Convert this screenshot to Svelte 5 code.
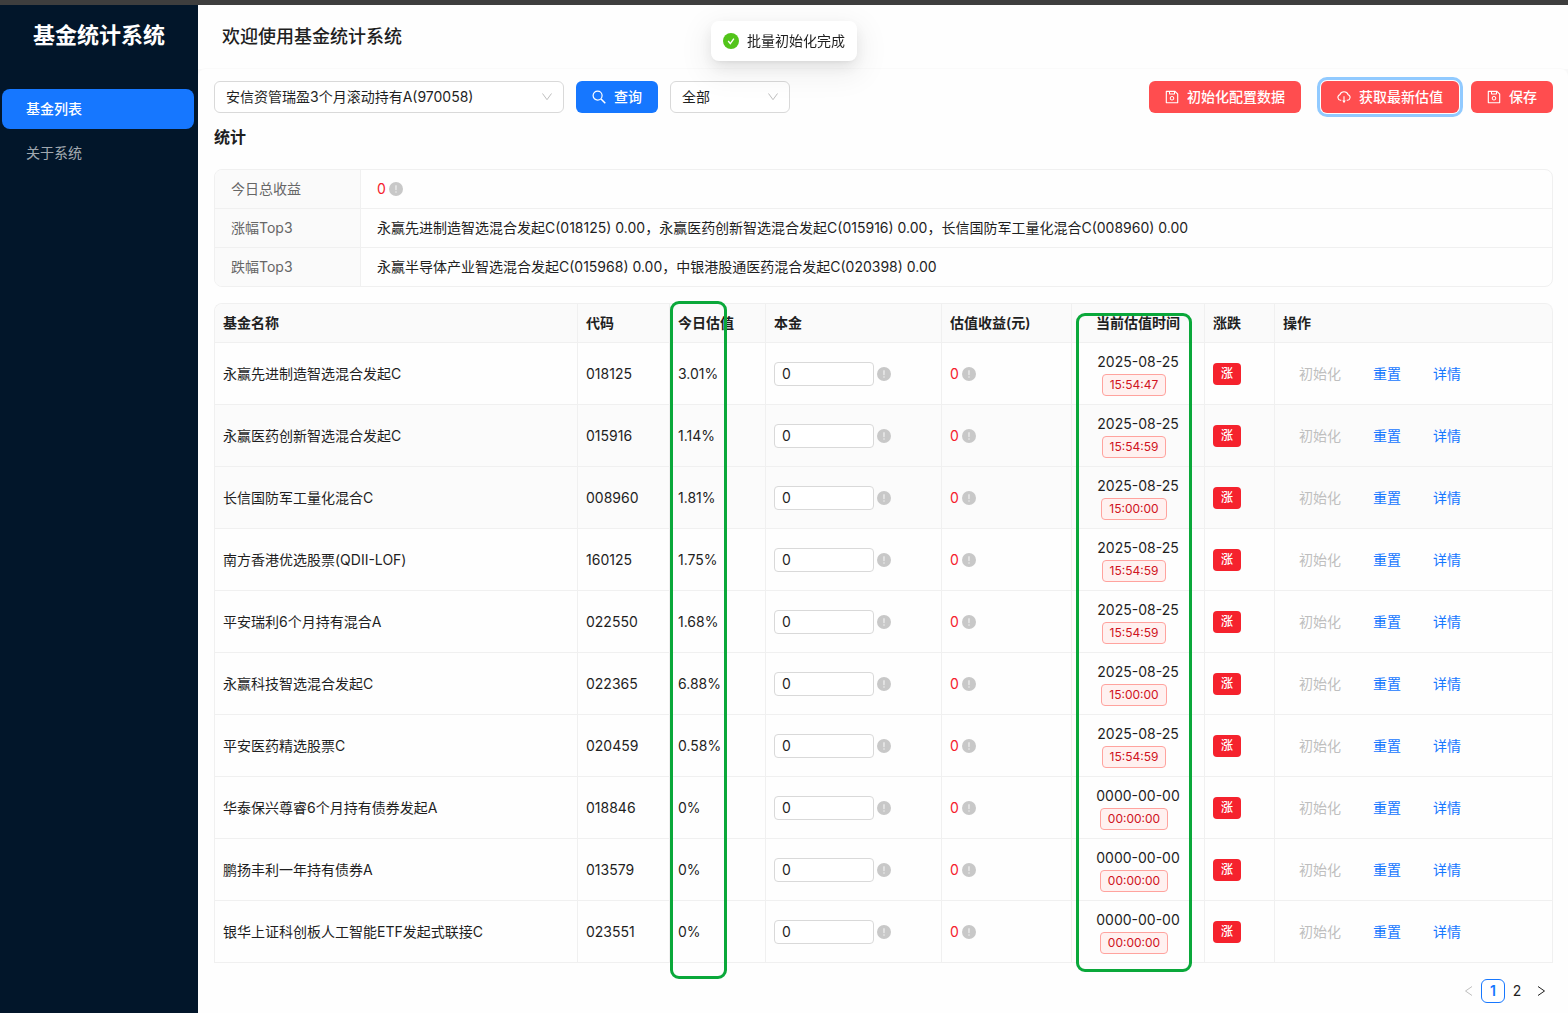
<script>
	const menus = ['基金列表', '关于系统'];
	let activeMenu = '基金列表';

	let fund = '970058';
	let type = 'all';
	let page = 1;

	const stats = [
		{ label: '今日总收益', total: 0 },
		{
			label: '涨幅Top3',
			text: '永赢先进制造智选混合发起C(018125) 0.00，永赢医药创新智选混合发起C(015916) 0.00，长信国防军工量化混合C(008960) 0.00',
		},
		{ label: '跌幅Top3', text: '永赢半导体产业智选混合发起C(015968) 0.00，中银港股通医药混合发起C(020398) 0.00' },
	];

	let funds = [
		{ name: '永赢先进制造智选混合发起C', code: '018125', rate: '3.01%', amount: 0, date: '2025-08-25', time: '15:54:47' },
		{ name: '永赢医药创新智选混合发起C', code: '015916', rate: '1.14%', amount: 0, date: '2025-08-25', time: '15:54:59', shaded: true },
		{ name: '长信国防军工量化混合C', code: '008960', rate: '1.81%', amount: 0, date: '2025-08-25', time: '15:00:00', shaded: true },
		{ name: '南方香港优选股票(QDII-LOF)', code: '160125', rate: '1.75%', amount: 0, date: '2025-08-25', time: '15:54:59' },
		{ name: '平安瑞利6个月持有混合A', code: '022550', rate: '1.68%', amount: 0, date: '2025-08-25', time: '15:54:59' },
		{ name: '永赢科技智选混合发起C', code: '022365', rate: '6.88%', amount: 0, date: '2025-08-25', time: '15:00:00' },
		{ name: '平安医药精选股票C', code: '020459', rate: '0.58%', amount: 0, date: '2025-08-25', time: '15:54:59' },
		{ name: '华泰保兴尊睿6个月持有债券发起A', code: '018846', rate: '0%', amount: 0, date: '0000-00-00', time: '00:00:00' },
		{ name: '鹏扬丰利一年持有债券A', code: '013579', rate: '0%', amount: 0, date: '0000-00-00', time: '00:00:00' },
		{ name: '银华上证科创板人工智能ETF发起式联接C', code: '023551', rate: '0%', amount: 0, date: '0000-00-00', time: '00:00:00' },
	];

	const reset = code => {
		funds = funds.map(item => (item.code === code ? { ...item, amount: 0 } : item));
	};
</script>

{#snippet tip()}
	<svg class="tip" viewBox="0 0 14 14" aria-hidden="true">
		<circle cx="7" cy="7" r="7" fill="#c8c8c8" />
		<path d="M6.500 3.500h1l-.1 4.600h-.8z" fill="#f0f0f0" stroke="#f0f0f0" stroke-width=".3" />
		<circle cx="7" cy="10" r=".75" fill="#f0f0f0" />
	</svg>
{/snippet}

{#snippet saveIcon()}
	<svg class="icon" viewBox="64 64 896 896" aria-hidden="true">
		<path
			fill="currentColor"
			d="M893.300 293.300L730.700 130.700c-7.500-7.500-16.700-13-26.700-16V112H144c-17.700 0-32 14.300-32 32v736c0 17.700 14.300 32 32 32h736c17.700 0 32-14.300 32-32V338.500c0-17-6.700-33.200-18.700-45.200zM384 184h256v104H384V184zm456 656H184V184h136v136c0 17.700 14.300 32 32 32h320c17.700 0 32-14.300 32-32V205.800l136 136V840zM512 442c-79.500 0-144 64.500-144 144s64.500 144 144 144 144-64.500 144-144-64.500-144-144-144zm0 224c-44.200 0-80-35.800-80-80s35.800-80 80-80 80 35.800 80 80-35.800 80-80 80z"
		/>
	</svg>
{/snippet}

{#snippet arrow()}
	<svg class="arrow" viewBox="0 0 12 12" aria-hidden="true">
		<path d="M1.500 2.500L6 8.700l4.500-6.200" fill="none" stroke="#bfbfbf" />
	</svg>
{/snippet}

<div class="layout">
	<aside>
		<div class="logo">基金统计系统</div>
		<nav>
			{#each menus as menu}
				<a href="#{menu}" class:active={menu === activeMenu} on:click={() => (activeMenu = menu)}>{menu}</a>
			{/each}
		</nav>
	</aside>

	<div class="right">
		<header>
			<h1>欢迎使用基金统计系统</h1>
		</header>

		<main>
			<!-- search + actions -->
			<div class="toolbar">
				<div class="group">
					<div class="select fund">
						<select aria-label="基金" bind:value={fund}>
							<option value="970058">安信资管瑞盈3个月滚动持有A(970058)</option>
						</select>
						{@render arrow()}
					</div>
					<button class="btn primary">
						<svg class="icon" viewBox="0 0 14 14" aria-hidden="true">
							<g fill="none" stroke="currentColor" stroke-width="1.200">
								<circle cx="5.600" cy="5.600" r="4.500" />
								<path d="M9 9l4.300 4.300" stroke-width="1.500" />
							</g>
						</svg>
						查询
					</button>
					<div class="select type">
						<select aria-label="类型" bind:value={type}>
							<option value="all">全部</option>
						</select>
						{@render arrow()}
					</div>
				</div>
				<div class="group">
					<button class="btn danger init">{@render saveIcon()}初始化配置数据</button>
					<button class="btn danger focused">
						<svg class="icon" viewBox="0 0 14 14" aria-hidden="true">
							<g fill="none" stroke="currentColor" stroke-width="1.100">
								<path d="M4.300 10.300H3.500a2.900 2.900 0 0 1-.7-5.600 4.500 4.500 0 0 1 8.400 0 2.900 2.900 0 0 1-.7 5.600h-.8" />
								<path d="M7 6.200v6" />
								<path d="M5.200 10.600h3.600L7 13z" fill="currentColor" stroke="none" />
							</g>
						</svg>
						获取最新估值
					</button>
					<button class="btn danger">{@render saveIcon()}保存</button>
				</div>
			</div>

			<h2>统计</h2>
			<table class="stats">
				<tbody>
					{#each stats as stat}
						<tr>
							<th scope="row">{stat.label}</th>
							<td>
								{#if stat.text}
									{stat.text}
								{:else}
									<span class="value"><span class="red">{stat.total}</span>{@render tip()}</span>
								{/if}
							</td>
						</tr>
					{/each}
				</tbody>
			</table>

			<div class="list">
				<table class="funds">
					<colgroup>
						<col />
						<col class="code" />
						<col class="rate" />
						<col class="amount" />
						<col class="profit" />
						<col class="time" />
						<col class="trend" />
						<col class="actions" />
					</colgroup>
					<thead>
						<tr>
							<th>基金名称</th>
							<th>代码</th>
							<th>今日估值</th>
							<th>本金</th>
							<th>估值收益(元)</th>
							<th class="center">当前估值时间</th>
							<th>涨跌</th>
							<th>操作</th>
						</tr>
					</thead>
					<tbody>
						{#each funds as item (item.code)}
							<tr class:shaded={item.shaded}>
								<td>{item.name}</td>
								<td>{item.code}</td>
								<td>{item.rate}</td>
								<td>
									<span class="value">
										<input type="text" aria-label="{item.name} 本金" bind:value={item.amount} />
										{@render tip()}
									</span>
								</td>
								<td><span class="value"><span class="red">0</span>{@render tip()}</span></td>
								<td>
									<div class="stamp">
										<span>{item.date}</span>
										<span class="tag">{item.time}</span>
									</div>
								</td>
								<td><span class="badge">涨</span></td>
								<td>
									<div class="links">
										<button disabled>初始化</button>
										<button on:click={() => reset(item.code)}>重置</button>
										<button>详情</button>
									</div>
								</td>
							</tr>
						{/each}
					</tbody>
				</table>
				<!-- highlighted columns -->
				<div class="mark mark-rate"></div>
				<div class="mark mark-time"></div>
			</div>

			<nav class="pager" aria-label="分页">
				<button aria-label="上一页" disabled={page === 1} on:click={() => (page -= 1)}>
					<svg viewBox="0 0 12 12" aria-hidden="true"><path d="M9 1.500L2.500 6 9 10.500" /></svg>
				</button>
				{#each [1, 2] as n}
					<button class:current={n === page} on:click={() => (page = n)}>{n}</button>
				{/each}
				<button aria-label="下一页" disabled={page === 2} on:click={() => (page += 1)}>
					<svg viewBox="0 0 12 12" aria-hidden="true"><path d="M3 1.500L9.500 6 3 10.500" /></svg>
				</button>
			</nav>
		</main>
	</div>
</div>

<div class="toast" role="status">
	<svg viewBox="0 0 16 16" aria-hidden="true">
		<circle cx="8" cy="8" r="8" fill="#52c41a" />
		<path d="M5.200 8l2.100 2.600 3.600-4.900" fill="none" stroke="#fff" stroke-width="1.400" />
	</svg>
	批量初始化完成
</div>

<style>
	:global(body) {
		background: #fefefe;
		color: #1f1f1f;
		font-family: Inter, 'Noto Sans CJK SC', sans-serif;
		font-size: 14px;
		line-height: 22px;
	}

	.layout {
		display: flex;
		min-height: 100vh;
		box-sizing: border-box;
		border-top: 5px solid #3e3e3e;
	}

	aside {
		flex: none;
		width: 198px;
		background: #02162a;
	}

	.logo {
		height: 60px;
		margin-bottom: 24px;
		color: #fff;
		font-size: 22px;
		font-weight: 700;
		line-height: 60px;
		text-align: center;
	}

	aside nav {
		display: flex;
		flex-direction: column;
		gap: 4px;
		padding: 0 4px 0 2px;
	}

	aside a {
		padding: 0 24px;
		border-radius: 8px;
		color: rgba(255, 255, 255, 0.65);
		line-height: 40px;
		text-decoration: none;
	}

	aside a.active {
		background: #1677ff;
		color: #fff;
		font-weight: 500;
	}

	.right {
		flex: 1;
		min-width: 0;
		background: #f8f8f8;
	}

	header {
		height: 64px;
		padding: 0 24px;
		background: #fefefe;
	}

	h1 {
		margin: 0;
		font-size: 18px;
		font-weight: 500;
		line-height: 64px;
	}

	main {
		padding: 12px 15px 10px 16px;
		border-radius: 8px 8px 0 0;
		background: #fefefe;
		box-shadow: 0 -1px 0 #fafafa;
	}

	.toolbar,
	.group {
		display: flex;
		align-items: center;
		gap: 12px;
	}

	.toolbar {
		justify-content: space-between;
	}

	.select {
		position: relative;
	}

	.fund {
		width: 350px;
	}

	.type {
		width: 120px;
	}

	select {
		width: 100%;
		height: 32px;
		padding: 0 30px 0 11px;
		border: 1px solid #d9d9d9;
		border-radius: 6px;
		background: #fff;
		color: inherit;
		font: inherit;
		appearance: none;
	}

	.arrow {
		position: absolute;
		top: 10px;
		right: 11px;
		width: 12px;
		height: 12px;
		pointer-events: none;
	}

	button {
		border: none;
		background: none;
		font: inherit;
		cursor: pointer;
	}

	.btn {
		display: flex;
		align-items: center;
		gap: 8px;
		height: 32px;
		padding: 0 16px;
		border-radius: 6px;
		color: #fff;
		font-weight: 500;
		white-space: nowrap;
	}

	.primary {
		background: #1677ff;
	}

	.danger {
		background: #ff4d4f;
	}

	.init {
		margin-right: 8px;
	}

	.focused {
		outline: 3px solid #91caff;
		outline-offset: 1px;
	}

	.icon {
		width: 14px;
		height: 14px;
	}

	h2 {
		margin: 12px 0 20px;
		font-size: 16px;
		font-weight: 600;
		line-height: 24px;
	}

	table {
		width: 100%;
		border-spacing: 0;
		text-align: left;
	}

	.stats {
		margin-bottom: 16px;
		border: 1px solid #f0f0f0;
		border-radius: 8px;
		overflow: hidden;
	}

	.stats th,
	.stats td {
		padding: 8px 16px;
		border-bottom: 1px solid #f0f0f0;
	}

	.stats tr:last-child > * {
		border-bottom: none;
	}

	.stats th {
		width: 113px;
		border-right: 1px solid #f0f0f0;
		background: #fafafa;
		color: #666;
		font-weight: 400;
	}

	.value {
		display: flex;
		align-items: center;
		gap: 3px;
	}

	.red {
		color: #f5222d;
	}

	.tip {
		width: 14px;
		height: 14px;
	}

	.list {
		position: relative;
	}

	.funds {
		border-top: 1px solid #f0f0f0;
		border-left: 1px solid #f0f0f0;
		border-radius: 8px 8px 0 0;
		table-layout: fixed;
	}

	.funds th,
	.funds td {
		padding: 8px;
		border-right: 1px solid #f0f0f0;
		border-bottom: 1px solid #f0f0f0;
	}

	.funds th {
		background: #fafafa;
		font-weight: 600;
	}

	.funds th:first-child {
		border-top-left-radius: 8px;
	}

	.funds th:last-child {
		border-top-right-radius: 8px;
	}

	.funds .center {
		text-align: center;
	}

	.shaded td {
		background: #fbfbfb;
	}

	.code {
		width: 92px;
	}

	.rate {
		width: 96px;
	}

	.amount {
		width: 176px;
	}

	.profit {
		width: 130px;
	}

	.time {
		width: 133px;
	}

	.trend {
		width: 70px;
	}

	.actions {
		width: 278px;
	}

	input {
		box-sizing: border-box;
		width: 100px;
		height: 24px;
		padding: 0 7px;
		border: 1px solid #d9d9d9;
		border-radius: 4px;
		background: #fff;
		color: inherit;
		font: inherit;
	}

	.stamp {
		display: flex;
		flex-direction: column;
		align-items: center;
		gap: 1px;
	}

	.tag {
		margin-right: 8px;
		padding: 0 7px;
		border: 1px solid #ffa39e;
		border-radius: 4px;
		background: #fff1f0;
		color: #cf1322;
		font-size: 12px;
		line-height: 20px;
	}

	.badge {
		display: inline-block;
		padding: 0 8px;
		border-radius: 4px;
		background: #f5222d;
		color: #fff;
		font-size: 12px;
		font-weight: 500;
		line-height: 22px;
		vertical-align: top;
	}

	.links {
		display: flex;
	}

	.links button {
		padding: 0 16px;
		color: #1677ff;
	}

	.links button:disabled {
		color: #bfbfbf;
		cursor: not-allowed;
	}

	.mark {
		position: absolute;
		border: 3px solid #0aa83a;
		border-radius: 9px;
		pointer-events: none;
	}

	.mark-rate {
		top: -2px;
		right: 826px;
		bottom: -16px;
		width: 51px;
	}

	.mark-time {
		top: 10px;
		right: 361px;
		bottom: -9px;
		width: 110px;
	}

	.pager {
		display: flex;
		justify-content: flex-end;
		margin-top: 16px;
	}

	.pager button {
		display: flex;
		align-items: center;
		justify-content: center;
		box-sizing: border-box;
		width: 24px;
		height: 24px;
		padding: 0;
		border-radius: 6px;
		color: #1f1f1f;
	}

	.pager .current {
		border: 1px solid #1677ff;
		background: #fff;
		color: #1677ff;
		font-weight: 600;
	}

	.pager button:disabled {
		color: #bfbfbf;
	}

	.pager svg {
		width: 12px;
		height: 12px;
		fill: none;
		stroke: currentColor;
	}

	.toast {
		position: fixed;
		top: 21px;
		left: 50%;
		display: flex;
		align-items: center;
		gap: 8px;
		padding: 9px 12px;
		border-radius: 8px;
		background: #fff;
		box-shadow:
			0 6px 16px rgba(0, 0, 0, 0.08),
			0 3px 6px -4px rgba(0, 0, 0, 0.12),
			0 9px 28px 8px rgba(0, 0, 0, 0.05);
		white-space: nowrap;
		transform: translateX(-50%);
	}

	.toast svg {
		width: 16px;
		height: 16px;
	}
</style>
